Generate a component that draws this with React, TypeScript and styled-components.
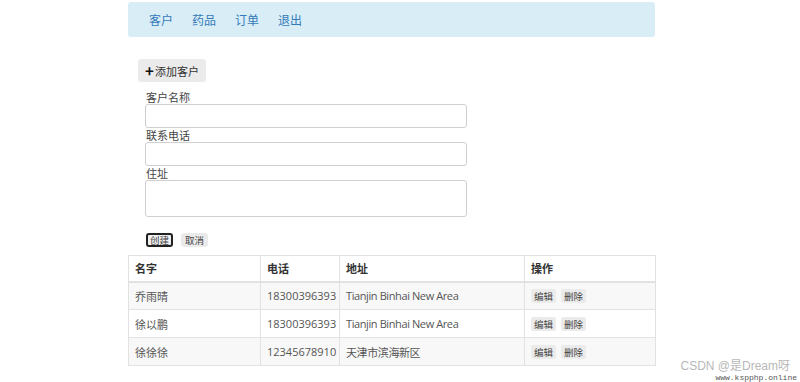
import React from "react";
import styled, { createGlobalStyle } from "styled-components";

const Global = createGlobalStyle`
  html, body { margin: 0; padding: 0; background: #fff; }
  body {
    font-family: "Open Sans", "Noto Sans CJK SC", sans-serif;
    font-size: 12px;
    color: #333;
  }
  * { box-sizing: border-box; }
`;

const Page = styled.div`
  width: 527px;
  margin-left: 128px;
  padding-top: 2px;
`;

const Nav = styled.nav`
  height: 35px;
  background: #d9edf7;
  border-radius: 3px;
  display: flex;
  align-items: center;
  padding-left: 21px;
  gap: 19px;
`;

const NavLink = styled.a`
  color: #337ab7;
  font-size: 12px;
  text-decoration: none;
  font-family: "Noto Sans CJK SC", sans-serif;
  line-height: 14px;
`;

const AddButton = styled.button`
  margin: 22px 0 0 10px;
  height: 23px;
  width: 68px;
  padding: 0;
  border: none;
  border-radius: 3px;
  background: #ebebeb;
  color: #333;
  font-family: "Noto Sans CJK SC", sans-serif;
  font-size: 11px;
  display: flex;
  align-items: center;
  justify-content: center;
  gap: 1px;
`;

const Plus = styled.span`
  font-weight: 700;
  font-size: 15px;
  line-height: 1;
  margin-top: -1px;
  color: #111;
`;

const Form = styled.form`
  margin-left: 17px;
  display: flex;
  flex-direction: column;
`;

const Label = styled.label<{ $first?: boolean }>`
  font-family: "Noto Sans CJK SC", sans-serif;
  font-size: 11px;
  line-height: 14px;
  height: 14px;
  padding-left: 1px;
  margin-top: ${(p) => (p.$first ? 8 : 0)}px;
  color: #444;
`;

const Input = styled.input`
  width: 322px;
  height: 24px;
  border: 1px solid #cfcfcf;
  border-radius: 3px;
  background: #fff;
`;

const TextArea = styled.textarea`
  width: 322px;
  height: 37px;
  border: 1px solid #cfcfcf;
  border-radius: 3px;
  resize: none;
  background: #fff;
`;

const ButtonRow = styled.div`
  display: flex;
  gap: 8px;
  margin-top: 16px;
  margin-left: 1px;
`;

const SmallButton = styled.button<{ $focused?: boolean }>`
  height: 14px;
  padding: 0 ${(p) => (p.$focused ? 2 : 4)}px;
  border: ${(p) => (p.$focused ? "2px solid #222" : "none")};
  border-radius: 3px;
  background: ${(p) => (p.$focused ? "#f0f0f0" : "#ebebeb")};
  color: #444;
  font-family: "Noto Sans CJK SC", sans-serif;
  font-size: 9.5px;
  line-height: 10px;
  display: flex;
  align-items: center;
`;

const Table = styled.table`
  margin-top: 8px;
  width: 527px;
  border-collapse: collapse;
  table-layout: fixed;
  border: 1px solid #e2e2e2;
`;

const Th = styled.th<{ $w: number }>`
  width: ${(p) => p.$w}px;
  height: 26px;
  text-align: left;
  padding: 0 6px;
  font-family: "Noto Sans CJK SC", sans-serif;
  font-size: 11px;
  font-weight: 600;
  color: #333;
  border: 1px solid #e2e2e2;
  border-bottom-width: 2px;
`;

const Tr = styled.tr<{ $striped?: boolean }>`
  background: ${(p) => (p.$striped ? "#f8f8f8" : "#fff")};
`;

const Td = styled.td<{ $tight?: boolean }>`
  height: 28px;
  padding: 0 6px;
  font-family: "Open Sans", "Noto Sans CJK SC", sans-serif;
  font-size: 11px;
  letter-spacing: ${(p) => (p.$tight ? "-0.4px" : "0")};
  color: #555;
  border: 1px solid #e2e2e2;
  white-space: nowrap;
  overflow: hidden;
`;

const Actions = styled.div`
  display: flex;
  gap: 5px;
`;

const ActionButton = styled.button`
  height: 14px;
  padding: 0 3px;
  border: none;
  border-radius: 2px;
  background: #ebebeb;
  color: #444;
  font-family: "Noto Sans CJK SC", sans-serif;
  font-size: 9.5px;
  display: flex;
  align-items: center;
`;

const Watermark = styled.div`
  position: absolute;
  right: 3px;
  top: 360px;
  text-align: right;
  color: #b8b8b8;
  display: flex;
  flex-direction: column;
  align-items: flex-end;
  gap: 2px;
`;

const WmTop = styled.div`
  font-family: "Liberation Sans", "Noto Sans CJK SC", sans-serif;
  font-size: 12px;
  line-height: 12px;
  margin-right: 7px;
`;

const WmBottom = styled.div`
  font-family: "Liberation Mono", monospace;
  font-size: 8px;
  line-height: 8px;
  color: #555;
`;

const rows = [
  { name: "乔雨晴", phone: "18300396393", addr: "Tianjin Binhai New Area" },
  { name: "徐以鹏", phone: "18300396393", addr: "Tianjin Binhai New Area" },
  { name: "徐徐徐", phone: "12345678910", addr: "天津市滨海新区" },
];

export default function App() {
  return (
    <>
      <Global />
      <Page>
        <Nav>
          <NavLink>客户</NavLink>
          <NavLink>药品</NavLink>
          <NavLink>订单</NavLink>
          <NavLink>退出</NavLink>
        </Nav>
        <AddButton>
          <Plus>+</Plus>添加客户
        </AddButton>
        <Form>
          <Label $first>客户名称</Label>
          <Input />
          <Label>联系电话</Label>
          <Input />
          <Label>住址</Label>
          <TextArea />
          <ButtonRow>
            <SmallButton type="button" $focused>创建</SmallButton>
            <SmallButton type="button">取消</SmallButton>
          </ButtonRow>
        </Form>
        <Table>
          <thead>
            <tr>
              <Th $w={132}>名字</Th>
              <Th $w={79}>电话</Th>
              <Th $w={185}>地址</Th>
              <Th $w={131}>操作</Th>
            </tr>
          </thead>
          <tbody>
            {rows.map((r, i) => (
              <Tr key={i} $striped={i % 2 === 0}>
                <Td>{r.name}</Td>
                <Td>{r.phone}</Td>
                <Td $tight>{r.addr}</Td>
                <Td>
                  <Actions>
                    <ActionButton>编辑</ActionButton>
                    <ActionButton>删除</ActionButton>
                  </Actions>
                </Td>
              </Tr>
            ))}
          </tbody>
        </Table>
      </Page>
      <Watermark>
        <WmTop>CSDN @是Dream呀</WmTop>
        <WmBottom>www.kspphp.online</WmBottom>
      </Watermark>
    </>
  );
}
